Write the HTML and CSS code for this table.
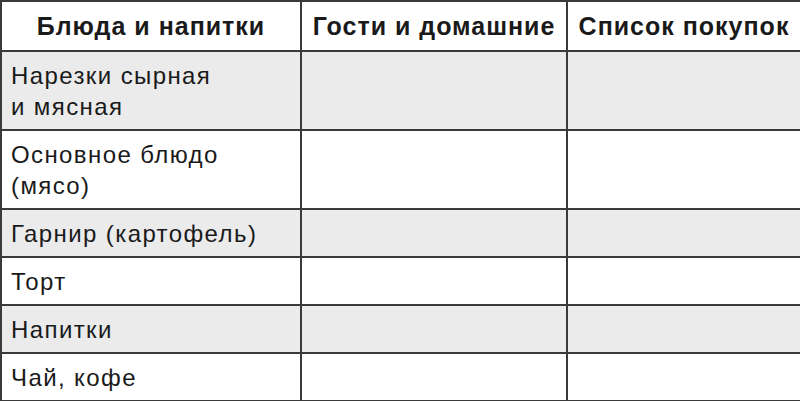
FILE: index.html
```html
<!DOCTYPE html>
<html lang="ru">
<head>
<meta charset="utf-8">
<link rel="stylesheet" href="styles.css">
</head>
<body>
<table class="menu">
  <colgroup>
    <col class="c1"><col class="c2"><col class="c3">
  </colgroup>
  <thead>
    <tr class="head"><th>Блюда и напитки</th><th>Гости и домашние</th><th>Список покупок</th></tr>
  </thead>
  <tbody>
    <tr class="tall shade"><td>Нарезки сырная<br>и мясная</td><td></td><td></td></tr>
    <tr class="tall"><td>Основное блюдо<br>(мясо)</td><td></td><td></td></tr>
    <tr class="short shade"><td>Гарнир (картофель)</td><td></td><td></td></tr>
    <tr class="short"><td>Торт</td><td></td><td></td></tr>
    <tr class="short shade"><td>Напитки</td><td></td><td></td></tr>
    <tr class="short"><td>Чай, кофе</td><td></td><td></td></tr>
  </tbody>
</table>
</body>
</html>
```

FILE: styles.css
```css
html, body {
  margin: 0;
  padding: 0;
  background: #ffffff;
}
.menu {
  border-collapse: collapse;
  table-layout: fixed;
  width: 800px;
  font-family: "Liberation Sans", Arial, sans-serif;
  color: #1a1a1a;
}
.c1 { width: 300px; }
.c2 { width: 266px; }
.c3 { width: 234px; }
.menu th, .menu td {
  border: 2px solid #3a3a3a;
  vertical-align: middle;
}
.menu th {
  font-size: 25px;
  font-weight: bold;
  letter-spacing: 1px;
  text-align: center;
  padding: 0;
  height: 48px;
  white-space: nowrap;
}
.menu td {
  font-size: 24px;
  letter-spacing: 1.4px;
  line-height: 31px;
  padding: 0 0 0 9px;
}
.tall td { height: 77px; }
.short td { height: 46px; }
.shade td { background: #ebebeb; }
```
